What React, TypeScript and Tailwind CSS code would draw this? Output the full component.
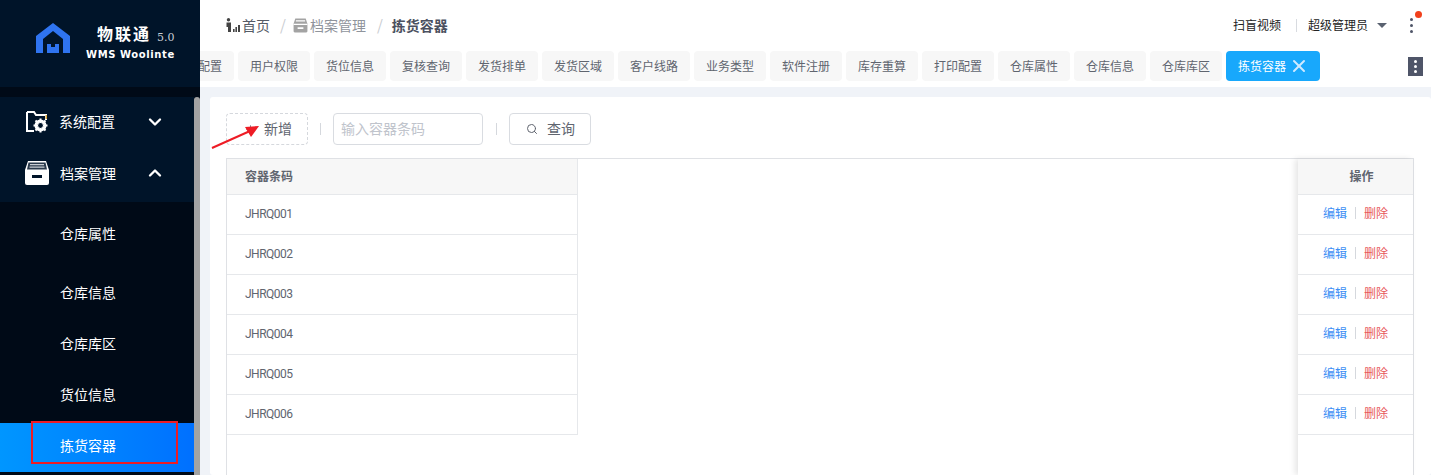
import { Plus, Search, X, ChevronDown, ChevronUp } from "lucide-react";

const font = { fontFamily: '"Noto Sans CJK SC", "Noto Sans", sans-serif' };

const tabs = ['用户权限', '货位信息', '复核查询', '发货排单', '发货区域', '客户线路', '业务类型', '软件注册', '库存重算', '打印配置', '仓库属性', '仓库信息', '仓库库区'];
const rows = ['JHRQ001', 'JHRQ002', 'JHRQ003', 'JHRQ004', 'JHRQ005', 'JHRQ006'];
const subMenu = [
	{ name: '仓库属性', cls: 'h-[66px] pb-[3px]' },
	{ name: '仓库信息', cls: 'h-[52px] pb-[3px]' },
	{ name: '仓库库区', cls: 'h-[50px] pb-[4px]' },
	{ name: '货位信息', cls: 'h-[52px] pb-[4px]' },
];

const Logo = () => (
	<svg width="36" height="30" viewBox="0 0 36 30">
		<path fill="#2f74f0" d="M18 0 L35 13 V30 H28 V16 L18 8 L8 16 V30 H1 V13 Z" />
		<path fill="#2f74f0" d="M12 21 H16 V24 H20 V21 H24 V30 H12 Z" />
	</svg>
);

const FolderGear = () => (
	<svg width="24" height="24" viewBox="0 0 24 24">
		<path fill="none" stroke="#fff" strokeWidth="2" d="M2 2 H9 L11 5 H21 V10 M2 2 V21 H9" />
		<path fill="#d8a53c" d="M20.5 5 H22 V9 H20.5 Z" />
		<circle cx="15.5" cy="15.5" r="4.5" fill="none" stroke="#fff" strokeWidth="3" />
		<path stroke="#fff" strokeWidth="2" d="M15.5 8.5 V22.5 M8.5 15.5 H22.5 M10.5 10.5 L20.5 20.5 M20.5 10.5 L10.5 20.5" />
		<circle cx="15.5" cy="15.5" r="2.4" fill="#001429" />
	</svg>
);

const Drawer = () => (
	<svg width="26" height="24" viewBox="0 0 26 24">
		<path fill="#fff" d="M4 0 H22 L25 9 V22 Q25 24 23 24 H3 Q1 24 1 22 V9 Z" />
		<path fill="#2a3a4c" d="M4.5 1.5 H21.5 L23 8.5 H3 Z" />
		<path fill="#c9ced4" d="M6 3 H20 V4.2 H6 Z M5.5 5.6 H20.5 V6.8 H5.5 Z" />
		<path fill="#001429" d="M8 14 H18 V17 H8 Z" />
	</svg>
);

const DrawerSmall = () => (
	<svg width="15" height="15" viewBox="0 0 26 24">
		<path fill="#a3a3a3" d="M4 0 H22 L25 9 V22 Q25 24 23 24 H3 Q1 24 1 22 V9 Z" />
		<path fill="#fff" d="M5 3 H21 V5 H5 Z M1 9 H25 V11 H1 Z M8 15 H18 V18 H8 Z" />
	</svg>
);

const HomeBars = () => (
	<svg width="14" height="14" viewBox="0 0 14 14">
		<circle cx="2.5" cy="1.8" r="1.7" fill="#444" />
		<path fill="#444" d="M0.5 4.5 H5 V14 H2 V9 H0.5 Z M7 11 H8.6 V14 H7 Z M9.4 9 H11 V14 H9.4 Z M12 7 H14 V14 H12 Z" />
	</svg>
);

export default function App() {
	return (
		<div className="relative flex w-[1431px] h-[475px] overflow-hidden bg-[#f0f3f8]" style={font}>
			{/* sidebar */}
			<aside className="w-[200px] h-full shrink-0 flex flex-col bg-[#000a17] text-white">
				<div className="h-[87px] shrink-0 bg-[#001429] flex items-start pl-[35px] pt-[23px] gap-[15px]">
					<Logo />
					<div className="flex flex-col -mt-[1px]">
						<div className="flex items-end gap-[6px] h-[22px] pl-[11px]">
							<span className="text-[16px] font-bold leading-[22px] tracking-[2px] whitespace-nowrap">物联通</span>
							<span className="text-[11px] leading-[14px] text-[#c8ced6] -mb-[1px]" style={{ fontFamily: '"DejaVu Serif", serif' }}>5.0</span>
						</div>
						<span className="font-bold leading-[16px] mt-[3px] tracking-[0.6px] whitespace-nowrap text-[10px]" style={{ fontFamily: '"DejaVu Sans", sans-serif' }}>WMS Woolinte</span>
					</div>
				</div>
				<div className="h-[10px] shrink-0" />
				<div className="flex-1 flex min-h-0">
					<div className="w-[194px] flex flex-col">
						<div className="h-[105px] shrink-0 bg-[#001429] flex flex-col">
							<div className="h-[50px] flex items-center pl-[25px] pr-[29px]">
								<FolderGear />
								<span className="ml-[10px] text-[14px] flex-1 pb-[2px]">系统配置</span>
								<ChevronDown size={20} strokeWidth={2.8} />
							</div>
							<div className="h-[52px] flex items-center pl-[24px] pr-[29px]">
								<Drawer />
								<span className="ml-[10px] text-[14px] flex-1">档案管理</span>
								<ChevronUp size={20} strokeWidth={2.8} />
							</div>
						</div>
						{subMenu.map((m) => (
							<div key={m.name} className={`${m.cls} shrink-0 flex items-center pl-[60px] text-[14px]`}>{m.name}</div>
						))}
						<div className="h-[49px] shrink-0 mt-[1px] flex items-center pl-[60px] pb-[4px] text-[14px] bg-gradient-to-r from-[#0096ff] to-[#0070ff]">拣货容器</div>
					</div>
					<div className="w-[6px] bg-[#a3a3a3] rounded-t-[3px]" />
				</div>
			</aside>

			{/* main */}
			<div className="flex-1 min-w-0 flex flex-col">
				<div className="h-[87px] shrink-0 bg-white flex flex-col">
					<div className="h-[51px] shrink-0 flex items-center pl-[26px] pr-[18px] pb-[1px] text-[14px]">
						<HomeBars />
						<span className="ml-[2px] text-[#555b66]">首页</span>
						<span className="text-[#c9ccd1] text-[15px] ml-[10px] mr-[7px]">/</span>
						<DrawerSmall />
						<span className="ml-[2px] text-[#8f949c]">档案管理</span>
						<span className="text-[#c9ccd1] text-[15px] ml-[11px] mr-[9px]">/</span>
						<span className="font-bold text-[#4b5160]">拣货容器</span>
						<div className="ml-auto flex items-center text-[12px] text-[#222]">
							<span>扫盲视频</span>
							<span className="w-px h-[13px] bg-[#d8dbe0] ml-[15px] mr-[11px]" />
							<span>超级管理员</span>
							<span className="ml-[9px] w-0 h-0 border-x-[5px] border-x-transparent border-t-[5px] border-t-[#5a6270]" />
							<div className="relative ml-[23px] flex flex-col gap-[3px]">
								<span className="w-[3px] h-[3px] rounded-full bg-[#4f5568]" />
								<span className="w-[3px] h-[3px] rounded-full bg-[#4f5568]" />
								<span className="w-[3px] h-[3px] rounded-full bg-[#4f5568]" />
								<span className="absolute -top-[7px] left-[5px] w-[7px] h-[7px] rounded-full bg-[#f2401c]" />
							</div>
						</div>
					</div>
					<div className="h-[30px] flex items-center">
						<div className="w-[1120px] h-full overflow-hidden flex justify-end gap-[4px] text-[12px] text-[#60656f]">
							<div className="w-[72px] shrink-0 h-full rounded-[4px] bg-[#f7f7f7] flex items-center justify-center pb-[1px]">打印配置</div>
							{tabs.map((t) => (
								<div key={t} className="w-[72px] shrink-0 h-full rounded-[4px] bg-[#f7f7f7] flex items-center justify-center pb-[1px]">{t}</div>
							))}
							<div className="w-[94px] shrink-0 h-full rounded-[4px] bg-[#18a8fc] text-white flex items-center pl-[12px]">
								<span className="pb-[1px]">拣货容器</span>
								<X size={20} strokeWidth={2.4} className="ml-[3px] text-[#cfeaff]" />
							</div>
						</div>
						<div className="ml-[88px] w-[15px] h-[19px] bg-[#4f5568] flex flex-col items-center justify-center gap-[2px]">
							<span className="w-[3px] h-[3px] rounded-full bg-white" />
							<span className="w-[3px] h-[3px] rounded-full bg-white" />
							<span className="w-[3px] h-[3px] rounded-full bg-white" />
						</div>
					</div>
				</div>

				<div className="flex-1 min-h-0 pl-[10px] pt-[10px]">
					<div className="h-full bg-white rounded-[3px] pl-[16px] pr-[17px] pt-[16px] flex flex-col">
						<div className="h-[32px] shrink-0 flex items-center">
							<div className="w-[82px] h-full border border-dashed border-[#d5d8dd] rounded-[4px] flex items-center pl-[17px] text-[#60656f]">
								<Plus size={13} strokeWidth={1.5} />
								<span className="ml-[7px] text-[14px] pb-[1px]">新增</span>
							</div>
							<span className="ml-[12px] w-px h-[12px] bg-[#d5d8dd]" />
							<div className="ml-[12px] w-[150px] h-full border border-[#d9dce1] rounded-[4px] flex items-center pl-[7px] pb-[1px] text-[14px] text-[#c0c4cc]">输入容器条码</div>
							<span className="ml-[13px] w-px h-[12px] bg-[#d5d8dd]" />
							<div className="ml-[12px] w-[82px] h-full border border-[#d9dce1] rounded-[4px] flex items-center pl-[16px] text-[14px] text-[#60656f]">
								<Search size={12} strokeWidth={2} />
								<span className="ml-[9px] pb-[1px]">查询</span>
							</div>
						</div>

						<div className="mt-[13px] flex-1 min-h-0 flex border border-b-0 border-[#dfe1e5] text-[12px] text-[#60656f]">
							<div className="w-[351px] shrink-0">
								<div className="h-[36px] bg-[#f7f7f7] border-b border-r border-[#e6e8eb] flex items-center pl-[18px] pb-[2px] font-bold">容器条码</div>
								{rows.map((r) => (
									<div key={r} className="h-[40px] border-b border-r border-[#e6e8eb] flex items-center pl-[18px] pb-[2px] tracking-[-0.5px]" style={{ fontFamily: 'Roboto, sans-serif' }}>{r}</div>
								))}
							</div>
							<div className="flex-1" />
							<div className="w-[115px] shrink-0 shadow-[-3px_0_6px_rgba(0,0,0,0.1)]">
								<div className="h-[36px] bg-[#f7f7f7] border-b border-[#e6e8eb] flex items-center justify-center pl-[12px] pb-[1px] font-bold">操作</div>
								{rows.map((r) => (
									<div key={r} className="h-[40px] border-b border-[#e6e8eb] flex items-center justify-center pb-[4px]">
										<span className="text-[#3d8ff5]">编辑</span>
										<span className="w-px h-[12px] bg-[#d5d8dd] mx-[8px]" />
										<span className="text-[#e8585a]">删除</span>
									</div>
								))}
							</div>
						</div>
					</div>
				</div>
			</div>

			{/* red annotations on top of the shot */}
			<div className="absolute left-[31px] top-[421px] w-[147px] h-[43px] border-[2px] border-[#ee1c25]" />
			<svg className="absolute left-[210px] top-[124px]" width="55" height="26" viewBox="0 0 55 26">
				<path d="M2 24 L40 7" stroke="#ee1c25" strokeWidth="2" />
				<path d="M49 2 L35 3 L41 13 Z" fill="#ee1c25" />
			</svg>
		</div>
	);
}
